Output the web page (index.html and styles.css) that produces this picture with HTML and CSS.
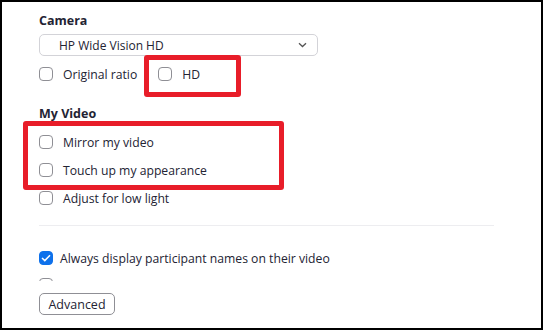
FILE: index.html
```html
<!DOCTYPE html>
<html lang="en">

<head>
    <meta charset="UTF-8">
    <title>Video Settings</title>
    <link rel="stylesheet" href="styles.css">
</head>

<body>
    <div class="frame">
        <div class="panel">
            <h2 class="heading">Camera</h2>
            <div class="select">
                <span>HP Wide Vision HD</span>
                <svg class="chevron" width="9" height="6" viewBox="0 0 9 6">
                    <path d="M1 1.2 L4.5 4.5 L8 1.2" fill="none" stroke="#555" stroke-width="1.3" />
                </svg>
            </div>
            <div class="row first">
                <label class="option"><span class="box"></span>Original ratio</label>
                <label class="option hd"><span class="box"></span>HD</label>
            </div>

            <h2 class="heading video-heading">My Video</h2>
            <div class="row first-video"><label class="option"><span class="box"></span>Mirror my video</label></div>
            <div class="row"><label class="option"><span class="box"></span>Touch up my appearance</label></div>
            <div class="row"><label class="option"><span class="box"></span>Adjust for low light</label></div>

            <div class="divider"></div>

            <div class="row">
                <label class="option checked">
                    <span class="box">
                        <svg width="10" height="8" viewBox="0 0 10 8">
                            <path d="M1 4 L3.8 6.6 L9 1.2" fill="none" stroke="#fff" stroke-width="1.5" />
                        </svg>
                    </span>Always display participant names on their video
                </label>
            </div>
            <div class="cut-row"><span class="box"></span></div>

            <button class="button">Advanced</button>

            <div class="mark mark-hd"></div>
            <div class="mark mark-video"></div>
        </div>
    </div>
</body>

</html>
```

FILE: styles.css
```css
body {
    margin: 0;
    font-family: "Open Sans", "Noto Sans", sans-serif;
    color: #232333;
    background: #fff;
}

.frame {
    width: 543px;
    height: 330px;
    box-sizing: border-box;
    border: 2px solid #000;
    overflow: hidden;
}

.panel {
    position: relative;
    padding: 10px 0 0 37px;
    height: 100%;
    box-sizing: border-box;
}

.heading {
    margin: 0;
    font-size: 12.5px;
    font-weight: 700;
    line-height: 18px;
}

.video-heading {
    margin-top: 17px;
}

.select {
    margin-top: 4px;
    width: 279px;
    height: 22px;
    box-sizing: border-box;
    border: 1px solid #d3d3d8;
    border-radius: 5px;
    display: flex;
    align-items: center;
    justify-content: space-between;
    padding: 0 10px 0 19px;
    font-size: 12px;
}

.row {
    height: 28px;
    display: flex;
    align-items: center;
}

.first {
    margin-top: 4px;
}

.first-video {
    margin-top: 5px;
}

.option {
    display: flex;
    align-items: center;
    gap: 10px;
    font-size: 12.2px;
}

.box {
    width: 14px;
    height: 14px;
    box-sizing: border-box;
    border: 1px solid #8f8f95;
    border-radius: 4px;
    display: flex;
    align-items: center;
    justify-content: center;
}

.hd {
    margin-left: 21px;
}

.checked .box {
    background: #0e71eb;
    border-color: #0e71eb;
}

.checked {
    gap: 7px;
}

.divider {
    margin-top: 13px;
    width: 455px;
    height: 1px;
    background: #ededf0;
    margin-bottom: 18px;
}

.cut-row {
    margin-top: 6px;
    height: 3px;
    overflow: hidden;
}

.button {
    margin-top: 12px;
    display: block;
    width: 76px;
    height: 22px;
    border: 1px solid #8f8f95;
    border-radius: 5px;
    background: #fff;
    font-family: inherit;
    font-size: 12.5px;
    color: #232333;
    padding: 0;
}

.mark {
    position: absolute;
    border: 5px solid #e81d29;
    border-radius: 3px;
    box-sizing: border-box;
}

.mark-hd {
    left: 142px;
    top: 53px;
    width: 97px;
    height: 42px;
}

.mark-video {
    left: 21px;
    top: 119px;
    width: 261px;
    height: 69px;
}
```
